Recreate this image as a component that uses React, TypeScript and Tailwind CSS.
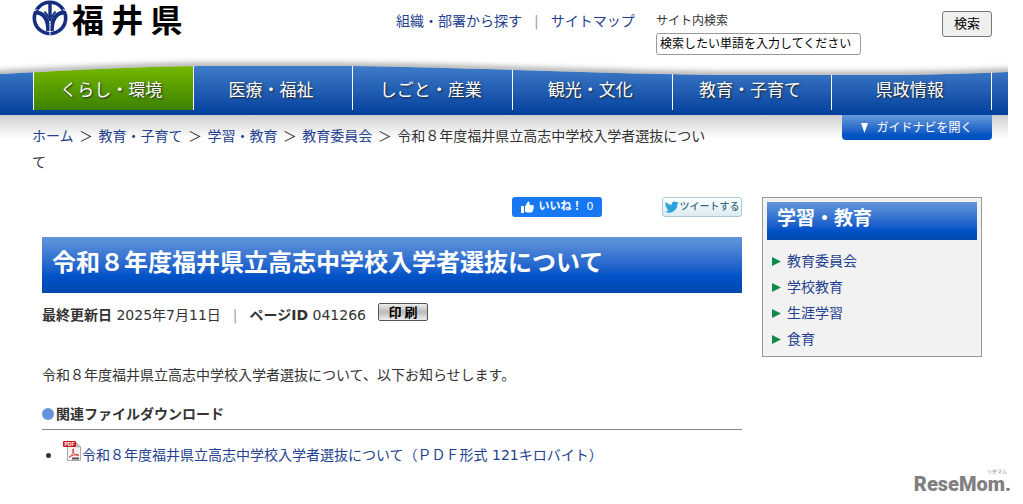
import { useState } from "react";

type linkType = { label: string; active?: boolean };

const navItems: linkType[] = [
    { label: "くらし・環境", active: true },
    { label: "医療・福祉" },
    { label: "しごと・産業" },
    { label: "観光・文化" },
    { label: "教育・子育て" },
    { label: "県政情報" },
];

const breadcrumbItems = ["ホーム", "教育・子育て", "学習・教育", "教育委員会"];
const sideLinks = ["教育委員会", "学校教育", "生涯学習", "食育"];
const pageTitle = "令和８年度福井県立高志中学校入学者選抜について";

function Emblem() {
    return (
        <svg className="size-9" viewBox="0 0 36 36" aria-hidden="true">
            <g fill="none" stroke="#172f80">
                <circle cx="18" cy="18" r="15.7" strokeWidth="3.6" />
                <path d="M18 2V17" strokeWidth="3.4" />
                <path d="M3 12.500C11 12.500 16.200 18 16.200 31" strokeWidth="4" />
                <path d="M33 12.500C25 12.500 19.800 18 19.800 31" strokeWidth="4" />
                <path d="M12.500 11.500C14 14 17 16 18 21C19 16 22 14 23.500 11.500" strokeWidth="2" />
            </g>
            <g fill="none" stroke="#fff">
                <path d="M18 24V36" strokeWidth="1" />
                <path d="M0 11.500L5 9.500M36 11.500L31 9.500" strokeWidth="1" />
            </g>
        </svg>
    );
}

// curved upper edge of the navigation, with its soft shadow
function NavWave() {
    return (
        <svg className="pointer-events-none absolute inset-x-0 top-0 h-5 w-full" viewBox="0 0 1008 20" preserveAspectRatio="none" aria-hidden="true">
            <defs>
                <clipPath id="above">
                    <path d="M0 0H1008V15Q960 17 900 18H720C560 16 440 9 330 9H200C120 10 60 14 0 17Z" />
                </clipPath>
                <filter id="soft" x="-5%" y="-100%" width="110%" height="300%">
                    <feGaussianBlur stdDeviation="3" />
                </filter>
            </defs>
            <g clipPath="url(#above)">
                <rect width="1008" height="20" fill="#fff" />
                <path d="M-20 18C60 14 120 10 200 9H330C440 9 560 16 720 18H900Q960 17 1030 14" fill="none" stroke="#777" strokeWidth="4" filter="url(#soft)" />
            </g>
        </svg>
    );
}

function PdfIcon() {
    return (
        <svg className="h-5 w-[18px] shrink-0" viewBox="0 0 18 20" aria-hidden="true">
            <path d="M4.500 1.500H13L17.500 6V19.500H4.500Z" fill="#f4f4f4" stroke="#aaa" />
            <path d="M13 1.500V6H17.500Z" fill="#ccc" stroke="#999" strokeWidth=".6" />
            <path d="M6 16.500C9 14.500 11 10.500 10.300 8C9.300 7 9.300 10 11 12.500C12.500 14.500 15 15 15.800 14C15 12.500 9 14 6 16.500Z" fill="none" stroke="#e0443e" />
            <rect x="9" y="16.500" width="7" height="2" fill="#555" />
            <rect width="13" height="6" rx="1" fill="#c9141b" />
            <text x="6.500" y="5" textAnchor="middle" fontSize="5" fontWeight="700" fontFamily="Liberation Sans, sans-serif" fill="#fff">PDF</text>
        </svg>
    );
}

export default function App() {
    const [keyword, setKeyword] = useState("検索したい単語を入力してください");

    return (
        <div className="bg-white font-['DejaVu_Sans','Noto_Sans_CJK_JP',sans-serif] text-sm text-[#333]">
            <div className="pr-[15px]">
                <header className="flex h-[57px] items-start pr-4 pl-8">
                    <a href="#" className="mr-auto flex items-center gap-1 font-['Noto_Sans_CJK_JP',sans-serif] text-[32px] leading-9 font-bold text-black">
                        <Emblem />
                        福 井 県
                    </a>
                    <div className="flex w-[260px] gap-3 pt-[11px] leading-5 text-[#243f8f]">
                        <a href="#">組織・部署から探す</a>
                        <span className="text-gray-400">|</span>
                        <a href="#">サイトマップ</a>
                    </div>
                    <form className="flex w-[336px] items-start justify-between" onSubmit={(e) => e.preventDefault()}>
                        <div className="flex flex-col pt-[13px] text-xs">
                            <label htmlFor="keyword" className="h-5">サイト内検索</label>
                            <input
                                id="keyword"
                                type="text"
                                value={keyword}
                                onChange={(e) => setKeyword(e.target.value)}
                                className="h-[22px] w-[205px] rounded-[3px] border border-[#999] bg-white px-[3px] pb-1 text-black"
                            />
                        </div>
                        <button type="submit" className="mt-[11px] h-[26px] w-[50px] rounded-[3px] border border-[#767676] bg-[#efefef] text-[13px] leading-5 text-black">検索</button>
                    </form>
                </header>

                <nav className="relative h-[58px] bg-linear-to-b from-[#4a87d0] to-[#003f9c] pr-4 pb-[5px] pl-[33px]">
                    <div className="flex h-full">
                        {
                            navItems.map((item) =>
                                <a
                                    key={item.label}
                                    href="#"
                                    className={`flex flex-1 items-center justify-center border-l border-white pt-[14px] pr-1 text-[17px] text-white [text-shadow:1px_1px_2px_#222] last:border-r ${item.active ? "bg-linear-to-b from-[#80c400] to-[#3c8200]" : ""}`}
                                >
                                    {item.label}
                                </a>
                            )
                        }
                    </div>
                    <NavWave />
                </nav>

                <div className="flex items-start justify-between bg-linear-to-b from-[#d0d0d0] to-white to-[24px] pr-4 pl-8">
                    <div className="max-w-[680px] pt-2 leading-[26px]">
                        {
                            breadcrumbItems.map((item) =>
                                <span key={item}><a href="#" className="text-[#243f8f]">{item}</a><span className="mx-px"> ＞ </span></span>
                            )
                        }
                        {pageTitle}
                    </div>
                    <button type="button" className="flex h-[25px] w-[150px] shrink-0 items-center justify-center gap-2 rounded-b-[4px] bg-linear-to-b from-[#669ad9] to-[#0052c2] to-80% text-xs text-white">
                        <svg className="h-[10px] w-[7px]" viewBox="0 0 7 10" aria-hidden="true"><path d="M0 0H7L3.500 10Z" fill="#fff" /></svg>
                        ガイドナビを開く
                    </button>
                </div>

                <div className="flex items-start gap-5 pt-[22px] pr-[26px] pl-[42px]">
                    <main className="min-w-0 flex-1">
                        <div className="flex justify-end gap-[60px]">
                            <button type="button" className="flex h-5 w-[90px] items-center justify-center gap-[5px] rounded-[3px] bg-[#1877f2] text-[11px] font-bold text-white">
                                <svg className="h-3 w-[13px]" viewBox="0 0 13 12" fill="#fff" aria-hidden="true">
                                    <path d="M0 5H3V12H0ZM4 5.500L7 0.500Q9.200 0 8.500 4H12Q13.500 5 12.500 6.500Q13 7.500 12.200 8.500Q12.500 9.500 11.500 10.200Q11.600 11.500 10 11.500H6L4 10.500Z" />
                                </svg>
                                <span>いいね！ <span className="font-normal">0</span></span>
                            </button>
                            <a href="#" className="flex h-5 w-20 items-center justify-center gap-px rounded-[3px] border border-[#a9cad9] bg-linear-to-b from-white to-[#dcebf2] text-[10px] font-medium whitespace-nowrap text-[#37697f]">
                                <svg className="size-[14px]" viewBox="0 0 24 24" fill="#2ba3dd" aria-hidden="true">
                                    <path d="M23.600 4.700a9.700 9.700 0 0 1-2.800.8 4.900 4.900 0 0 0 2.100-2.700 9.700 9.700 0 0 1-3.100 1.200A4.900 4.900 0 0 0 11.500 8.400 13.900 13.900 0 0 1 1.400 3.300 4.900 4.900 0 0 0 2.900 9.800a4.900 4.900 0 0 1-2.200-.6 4.900 4.900 0 0 0 3.900 4.900 4.900 4.900 0 0 1-2.200.1A4.900 4.900 0 0 0 7 17.600 9.800 9.800 0 0 1 0 19.500 13.900 13.900 0 0 0 21.200 7.200a9.900 9.900 0 0 0 2.400-2.500Z" />
                                </svg>
                                ツイートする
                            </a>
                        </div>

                        <h1 className="mt-5 h-14 bg-linear-to-b from-[#6496d9] via-[#0052c8] via-70% to-[#0049ad] px-[10px] pt-2 text-2xl leading-9 font-bold text-white">{pageTitle}</h1>

                        <div className="flex h-11 items-center gap-3">
                            <span><b>最終更新日</b> 2025年7月11日</span>
                            <span className="text-gray-400">|</span>
                            <span><b>ページID</b> 041266</span>
                            <button type="button" className="mb-[6px] h-[18px] w-[50px] rounded-[2px] border border-[#555] bg-linear-to-b from-[#eee] via-[#bbb] to-[#eee] font-['Noto_Sans_CJK_JP',sans-serif] text-[13px] leading-4 font-bold text-black">印 刷</button>
                        </div>

                        <p className="mt-[25px] leading-[26px]">令和８年度福井県立高志中学校入学者選抜について、以下お知らせします。</p>

                        <h2 className="mt-[14px] flex h-7 items-center gap-[2px] border-b border-[#888] pb-[3px] font-bold">
                            <span className="size-3 rounded-full bg-[#6694dc]" />
                            関連ファイルダウンロード
                        </h2>
                        <ul className="mt-3">
                            <li className="flex h-[26px] items-center">
                                <span className="mr-3 ml-1 size-[5px] rounded-full bg-[#333]" />
                                <a href="#" className="flex items-center gap-px leading-[26px] text-[#243f8f]">
                                    <span className="mb-2"><PdfIcon /></span>
                                    {pageTitle}（ＰＤＦ形式 121キロバイト）
                                </a>
                            </li>
                        </ul>
                    </main>

                    <aside className="w-[220px] border border-[#999] bg-[#f2f2f2] p-1 pb-1">
                        <h2 className="h-[38px] bg-linear-to-b from-[#6496d9] via-[#0052c8] via-75% to-[#0049ad] px-[10px] text-[19px] leading-8 font-bold text-white">学習・教育</h2>
                        <ul className="mt-2 px-[5px] leading-[26px]">
                            {
                                sideLinks.map((label) =>
                                    <li key={label} className="flex items-center gap-[6px]">
                                        <svg className="h-[9px] w-[9px]" viewBox="0 0 9 9" aria-hidden="true"><path d="M0 0L9 4.500L0 9Z" fill="#128a4c" /></svg>
                                        <a href="#" className="text-[#243f8f]">{label}</a>
                                    </li>
                                )
                            }
                        </ul>
                    </aside>
                </div>
            </div>

            <footer className="flex flex-col items-end pr-3 text-[#808080]">
                <span className="pr-1 text-[5px] leading-[6px]">リセマム</span>
                <span className="font-['Roboto',sans-serif] text-xl leading-5 font-black">ReseMom.</span>
            </footer>
        </div>
    );
}
